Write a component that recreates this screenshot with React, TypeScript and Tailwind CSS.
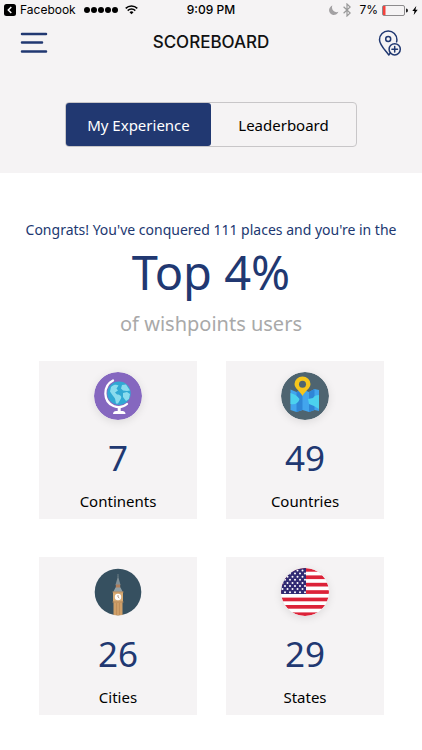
import { useState, type ReactNode } from "react";

function BackIcon() {
  return (
    <svg viewBox="0 0 12 12" className="h-3 w-3" aria-hidden>
      <rect width="12" height="12" rx="2.5" fill="#000" />
      <path d="M7.3 3 4.3 6l3 3" fill="none" stroke="#fff" strokeWidth="1.5" />
    </svg>
  );
}

function SignalDots() {
  return (
    <svg viewBox="0 0 35 6" className="h-[6px] w-[35px]" aria-hidden>
      {[3, 10, 17, 24, 31].map((cx) => (
        <circle key={cx} cx={cx} cy="3" r="3" />
      ))}
    </svg>
  );
}

function WifiIcon() {
  return (
    <svg viewBox="0 0 13 10" className="h-[10px] w-[13px]" fill="none" stroke="#000" strokeWidth="1.5" aria-hidden>
      <path d="M.7 3.4a8.4 8.4 0 0 1 11.6 0" />
      <path d="M2.7 5.6a5.5 5.5 0 0 1 7.6 0" />
      <path d="M4.5 7.2a3 3 0 0 1 4 0l-2 2.1Z" fill="#000" stroke="none" />
    </svg>
  );
}

function MoonIcon() {
  return (
    <svg viewBox="0 0 10 10" className="h-[10px] w-[10px]" fill="#a3a1a3" aria-hidden>
      <path d="M3.4.6A4.8 4.8 0 1 0 9.4 6.8 4.7 4.7 0 0 1 3.4.6Z" />
    </svg>
  );
}

function BluetoothIcon() {
  return (
    <svg viewBox="0 0 8 14" className="h-[14px] w-2" fill="none" stroke="#999" strokeWidth="1.2" aria-hidden>
      <path d="m.6 3.7 6.6 6.3L4 13V1l3.2 3L.6 10.3" />
    </svg>
  );
}

function BatteryIcon() {
  return (
    <svg viewBox="0 0 26 11" className="h-[11px] w-[26px]" aria-hidden>
      <rect x=".5" y=".5" width="22" height="10" rx="1.5" fill="none" stroke="#8d8b8d" />
      <rect x="1" y="1" width="2.5" height="9" fill="#f5413c" />
      <path d="M24 3.5a2 2 0 0 1 0 4Z" fill="#222" />
    </svg>
  );
}

function BoltIcon() {
  return (
    <svg viewBox="0 0 6 9" className="h-[9px] w-[6px]" aria-hidden>
      <path d="M4.3 0 .3 5h2.2L1.7 9l4-5.2H3.4Z" />
    </svg>
  );
}

function MenuIcon() {
  return (
    <svg viewBox="0 0 28 22" className="h-[22px] w-7" stroke="#213871" strokeWidth="2.5" strokeLinecap="round" aria-hidden>
      <path d="M2 2h24M2 10.500h20M2 19.500h24" />
    </svg>
  );
}

function AddPinIcon() {
  return (
    <svg viewBox="0 0 24 27" className="h-[27px] w-6" fill="none" stroke="#213871" strokeWidth="1.5" strokeLinecap="round" strokeLinejoin="round" aria-hidden>
      <path d="m12.5 22.8-1.7 2.2C8 21 1.5 15 1.5 9.7a8.700 8.700 0 0 1 17.400 0c0 .8-.1 1.500-.3 2.200" />
      <circle cx="10.2" cy="9" r="2.5" />
      <circle cx="16.7" cy="19.3" r="5.6" />
      <path d="M16.7 16.5v5.6M13.9 19.3h5.6" />
    </svg>
  );
}

const disc = "h-12 w-12 rounded-full shadow-[0_2px_8px_rgba(0,0,0,0.1)]";

function GlobeIcon() {
  return (
    <svg viewBox="0 0 48 48" className={disc} aria-hidden>
      <circle cx="24" cy="24" r="24" fill="#8567bf" />
      <path d="M19 8.5C8.5 14 9 29.5 19.5 34c5 2 10 1 13.500-2" fill="none" stroke="#fff" strokeWidth="2.3" strokeLinecap="round" />
      <circle cx="25" cy="21.3" r="11.7" fill="#31a9d4" />
      <path d="M17 15c3-3 6-2.500 7.500-1.500l-2 3 1.500 2-3 2 2 2c3 0 5 2 4 4l-3 5h-2l-1-5-3-4-2-3ZM28 13l4-.5 4 6-3 .5-4-.5-2-2ZM29 21l4-1 3 2-1 5-3 2-3-4Z" fill="#8adcee" />
      <path d="M25.200 35v4.500" fill="none" stroke="#fff" strokeWidth="3" />
      <path d="M19 42c0-2 1.500-3 3-3h6.500c1.500 0 3 1 3 3Z" fill="#fff" />
    </svg>
  );
}

function MapIcon() {
  return (
    <svg viewBox="0 0 48 48" className={disc} aria-hidden>
      <circle cx="24" cy="24" r="24" fill="#4e6470" />
      <path d="m9.500 17.500 6 2.500 6-2.500 6.500 2.500 5.500-3 4.500 1v21l-4.500-1-5.500 2-6.500-2-6 2-6-2Z" fill="#42a5ed" />
      <path d="m15.500 20 6-2.500V38l-6 2ZM28 20l5.500-3v21L28 40Z" fill="#2f86d6" />
      <path d="M9.500 21c4 1 7 3 9 6-1 4-4 6-9 5ZM38 23c-3 0-5 1-6 3l-5 1 1 5 5 2 5 3Z" fill="#4cd2ee" />
      <path d="M21.500 24C19 19 13.500 16.500 13.500 12a8 7.500 0 0 1 16 0C29.500 16.500 24 19 21.500 24Z" fill="#f5c51c" />
      <circle cx="21.5" cy="12.2" r="3.5" fill="#4e6470" />
    </svg>
  );
}

function TowerIcon() {
  return (
    <svg viewBox="0 0 48 48" className="h-12 w-12" aria-hidden>
      <circle cx="24" cy="24" r="23.3" fill="#365060" />
      <path d="M19.500 33h9v14a24 24 0 0 1-9 0Z" fill="#cf9f68" />
      <path d="M22.500 35v12M25.500 35v12" stroke="#bd8c58" strokeWidth=".8" />
      <path d="M24 6v3" stroke="#829097" strokeWidth=".7" />
      <path d="m24 8 2.500 9h-5Z" fill="#829097" />
      <path d="M21.800 16.500h4.400V20h-4.400Z" fill="#b07f5c" />
      <path d="M21.500 19.500h5l2.500 5h-10Z" fill="#91a0a6" />
      <path d="M19 24h10v9.500H19Z" fill="#d6aa74" />
      <path d="M18.500 24h11M18.500 34h11" stroke="#b98b5d" />
      <circle cx="24" cy="29" r="3.2" fill="#fff" />
      <path d="M24 27v2l1.300 1" fill="none" stroke="#9d7354" strokeWidth=".7" />
    </svg>
  );
}

function FlagIcon() {
  return (
    <svg viewBox="0 0 48 48" className={disc} aria-hidden>
      <clipPath id="flag-disc">
        <circle cx="24" cy="24" r="24" />
      </clipPath>
      <g clipPath="url(#flag-disc)">
        <rect width="48" height="48" fill="#fff" />
        {[0, 1, 2, 3, 4, 5, 6].map((i) => (
          <rect key={i} y={i * 7.4} width="48" height="3.7" fill="#dc2339" />
        ))}
        <rect width="25" height="26" fill="#312b73" />
        {[0, 1, 2, 3, 4, 5, 6, 7].map((row) =>
          [0, 1, 2, 3, 4].map((col) => (
            <circle key={`${row}-${col}`} cx={1.5 + col * 5 + (row % 2) * 2.5} cy={2.5 + row * 3.1} r="1" fill="#fff" />
          )),
        )}
      </g>
    </svg>
  );
}

type Stat = { label: string; value: number; icon: ReactNode };

const stats: Stat[] = [
  { label: "Continents", value: 7, icon: <GlobeIcon /> },
  { label: "Countries", value: 49, icon: <MapIcon /> },
  { label: "Cities", value: 26, icon: <TowerIcon /> },
  { label: "States", value: 29, icon: <FlagIcon /> },
];

const tabs = ["My Experience", "Leaderboard"];

function StatusBar() {
  return (
    <div className="grid h-5 grid-cols-[1fr_auto_1fr] items-center px-1 font-[Inter,sans-serif] text-xs text-black">
      <div className="flex items-center gap-1">
        <BackIcon />
        <span>Facebook</span>
        <span className="flex items-center gap-1.5 pl-1">
          <SignalDots />
          <WifiIcon />
        </span>
      </div>
      <span className="font-medium">9:09 PM</span>
      <div className="flex items-center justify-end gap-1">
        <MoonIcon />
        <BluetoothIcon />
        <span className="pl-1">7%</span>
        <BatteryIcon />
        <BoltIcon />
      </div>
    </div>
  );
}

function StatCard({ label, value, icon }: Stat) {
  return (
    <article className="flex aspect-square flex-col items-center bg-[#f5f3f4] pt-[11px]">
      {icon}
      <p className="mt-4 text-[35px] leading-[44px] text-[#213871]">{value}</p>
      <h2 className="mt-[9px] text-[15px] leading-6 text-black">{label}</h2>
    </article>
  );
}

export default function App() {
  const [active, setActive] = useState(tabs[0]);

  return (
    <div className="min-h-screen bg-white font-['Noto_Sans',sans-serif]">
      <header className="bg-[#f5f3f4] pb-[26px]">
        <StatusBar />
        <div className="grid h-[46px] grid-cols-[1fr_auto_1fr] items-center px-5">
          <button type="button" aria-label="Menu" className="justify-self-start">
            <MenuIcon />
          </button>
          <h1 className="font-[Inter,sans-serif] text-[17px] font-medium text-[#111]">SCOREBOARD</h1>
          <button type="button" aria-label="Add place" className="justify-self-end">
            <AddPinIcon />
          </button>
        </div>
        <div className="mx-[65px] mt-9 flex h-[45px] rounded-[4px] border border-[#c8c6c8]" role="tablist">
          {tabs.map((tab) => (
            <button
              key={tab}
              type="button"
              role="tab"
              aria-selected={active === tab}
              onClick={() => setActive(tab)}
              className={`flex-1 rounded-[3px] pt-px text-[15px] ${active === tab ? "bg-[#213871] text-white" : "text-black"}`}
            >
              {tab}
            </button>
          ))}
        </div>
      </header>

      <main className="pb-9 pt-[45px]">
        <section className="text-center text-[#213871]">
          <p className="text-sm leading-6">Congrats! You've conquered 111 places and you're in the</p>
          <p className="text-[47px] leading-[60px]">Top 4%</p>
          <p className="mt-2 text-xl leading-7 text-[#a9a9a9]">of wishpoints users</p>
        </section>
        <section className="mt-[23px] grid grid-cols-2 gap-x-[29px] gap-y-[38px] pl-[39px] pr-[38px]">
          {stats.map((stat) => (
            <StatCard key={stat.label} {...stat} />
          ))}
        </section>
      </main>
    </div>
  );
}
